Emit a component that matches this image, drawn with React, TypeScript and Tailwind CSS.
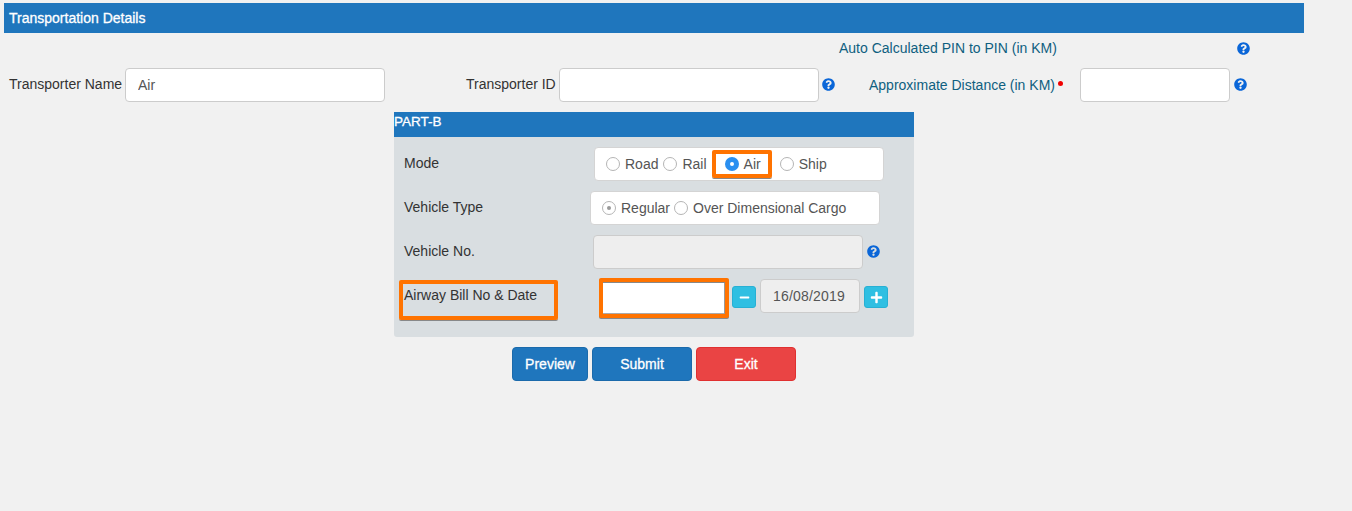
import React from 'react';
import { FaQuestionCircle, FaMinus, FaPlus } from 'react-icons/fa';

const HelpIcon = () => <FaQuestionCircle className="w-[13px] h-[13px] text-[#0a66d8]" />;

const Radio = ({ checked, disabled, label }: { checked?: boolean; disabled?: boolean; label: string }) => (
  <span className="flex items-center">
    {checked && !disabled ? (
      <span className="w-[14px] h-[14px] rounded-full bg-[#2a8ff0] flex items-center justify-center">
        <span className="w-[4px] h-[4px] rounded-full bg-white" />
      </span>
    ) : (
      <span className="w-[14px] h-[14px] rounded-full border border-[#b5b5b5] bg-white flex items-center justify-center">
        {checked && <span className="w-[4px] h-[4px] rounded-full bg-[#999999]" />}
      </span>
    )}
    <span className="ml-[5px]">{label}</span>
  </span>
);

export default function App() {
  return (
    <div className="h-[511px] bg-[#f1f1f1] pt-[3px] text-[14px] text-[#333333] font-['Liberation_Sans',Arial,sans-serif] overflow-hidden">
      {/* Transportation header */}
      <div className="ml-[4px] w-[1300px] h-[30px] bg-[#1f76bd] text-white pl-[5px] leading-[30px] text-[14px] [-webkit-text-stroke:0.3px_white]">
        Transportation Details
      </div>

      <div className="flex h-[35px] items-center pb-[4px]">
        <span className="ml-[839px] text-[#0f5f80] text-[14px]">Auto Calculated PIN to PIN (in KM)</span>
        <span className="ml-auto mr-[102px]"><HelpIcon /></span>
      </div>

      {/* Transporter row */}
      <div className="flex items-center h-[34px]">
        <label className="ml-[9px] w-[116px] pb-[2px] text-[14px]">Transporter Name</label>
        <input
          readOnly
          value="Air"
          className="w-[260px] h-[34px] bg-white border border-[#cccccc] rounded-[4px] px-[12px] text-[14px] text-[#555555]"
        />
        <label className="ml-[81px] w-[93px] pb-[2px] text-[14px]">Transporter ID</label>
        <input className="w-[260px] h-[34px] bg-white border border-[#cccccc] rounded-[4px]" />
        <span className="ml-[3px] pb-[2px]"><HelpIcon /></span>
        <label className="ml-[34px] text-[#0f5f80] text-[14px]">Approximate Distance (in KM)</label>
        <span className="ml-[3px] mb-[4px] w-[5px] h-[5px] rounded-full bg-[#f00000]" />
        <input className="ml-[17px] w-[150px] h-[34px] bg-white border border-[#cccccc] rounded-[4px]" />
        <span className="ml-[4px] pb-[2px]"><HelpIcon /></span>
      </div>

      {/* Part B panel */}
      <div className="ml-[394px] mt-[10px] w-[520px]">
        <div className="h-[25px] bg-[#1f76bd] text-white text-[13.5px] leading-[20px] [-webkit-text-stroke:0.3px_white]">PART-B</div>
        <div className="h-[200px] bg-[#d9dee1] rounded-b-[3px] pt-[10px]">
          <div className="flex h-[34px]">
            <span className="ml-[10px] w-[190px] pt-[6px]">Mode</span>
            <div className="w-[290px] h-[34px] bg-white border border-[#d4d4d4] rounded-[4px] flex items-center pl-[11px] text-[#555555]">
              <Radio label="Road" />
              <span className="ml-[5px]"><Radio label="Rail" /></span>
              <span className="relative ml-[18px]">
                <Radio checked label="Air" />
                <span className="absolute -left-[13px] -top-[4px] w-[60px] h-[28px] border-[4px] border-[#ff7300] rounded-[2px] shadow-[0_1px_0_#888888]" />
              </span>
              <span className="ml-[19px]"><Radio label="Ship" /></span>
            </div>
          </div>
          <div className="flex h-[34px] mt-[10px]">
            <span className="ml-[10px] w-[186px] pt-[6px]">Vehicle Type</span>
            <div className="w-[290px] h-[34px] bg-white border border-[#d4d4d4] rounded-[4px] flex items-center pl-[11px] text-[#555555]">
              <Radio checked disabled label="Regular" />
              <span className="ml-[4px]"><Radio disabled label="Over Dimensional Cargo" /></span>
            </div>
          </div>
          <div className="flex h-[34px] mt-[10px] items-center">
            <span className="ml-[10px] w-[189px] pb-[2px]">Vehicle No.</span>
            <input disabled className="w-[270px] h-[34px] bg-[#eeeeee] border border-[#cccccc] rounded-[4px]" />
            <span className="ml-[4px] pb-[2px]"><HelpIcon /></span>
          </div>
          <div className="flex mt-[9px] items-start">
            <div className="ml-[5px] mt-[2px] w-[159px] h-[40px] border-[4px] border-[#ff7300] rounded-[2px] pl-[1px] pt-[2px] leading-[18px] shadow-[0_1px_0_#888888]">
              Airway Bill No &amp; Date
            </div>
            <input className="ml-[41px] w-[130px] h-[40px] bg-white border-[4px] border-[#ff7300] rounded-[2px] shadow-[0_1px_0_#888888,inset_0_1px_0_#888888,inset_-1px_0_0_#999999,inset_0_-1px_0_#aaaaaa]" />
            <button className="ml-[3px] mt-[8px] w-[24px] h-[22px] bg-[#2fbfe2] border border-[#27b0d4] rounded-[3px] flex items-center justify-center text-white">
              <FaMinus className="w-[11px] h-[11px]" />
            </button>
            <div className="ml-[4px] mt-[1px] w-[100px] h-[34px] bg-[#eeeeee] border border-[#cccccc] rounded-[4px] flex items-center justify-center pr-[2px] text-[#555555] tracking-[0.2px]">
              16/08/2019
            </div>
            <button className="ml-[4px] mt-[8px] w-[24px] h-[22px] bg-[#2fbfe2] border border-[#27b0d4] rounded-[3px] flex items-center justify-center text-white">
              <FaPlus className="w-[13px] h-[13px]" />
            </button>
          </div>
        </div>
      </div>

      {/* Actions */}
      <div className="ml-[512px] mt-[10px] flex gap-[4px] text-white text-[14px] font-medium [-webkit-text-stroke:0.3px_white]">
        <button className="w-[76px] h-[34px] bg-[#1f76bd] border border-[#1b6aab] rounded-[4px]">Preview</button>
        <button className="w-[100px] h-[34px] bg-[#1f76bd] border border-[#1b6aab] rounded-[4px]">Submit</button>
        <button className="w-[100px] h-[34px] bg-[#ea4444] border border-[#e03030] rounded-[4px]">Exit</button>
      </div>
    </div>
  );
}
